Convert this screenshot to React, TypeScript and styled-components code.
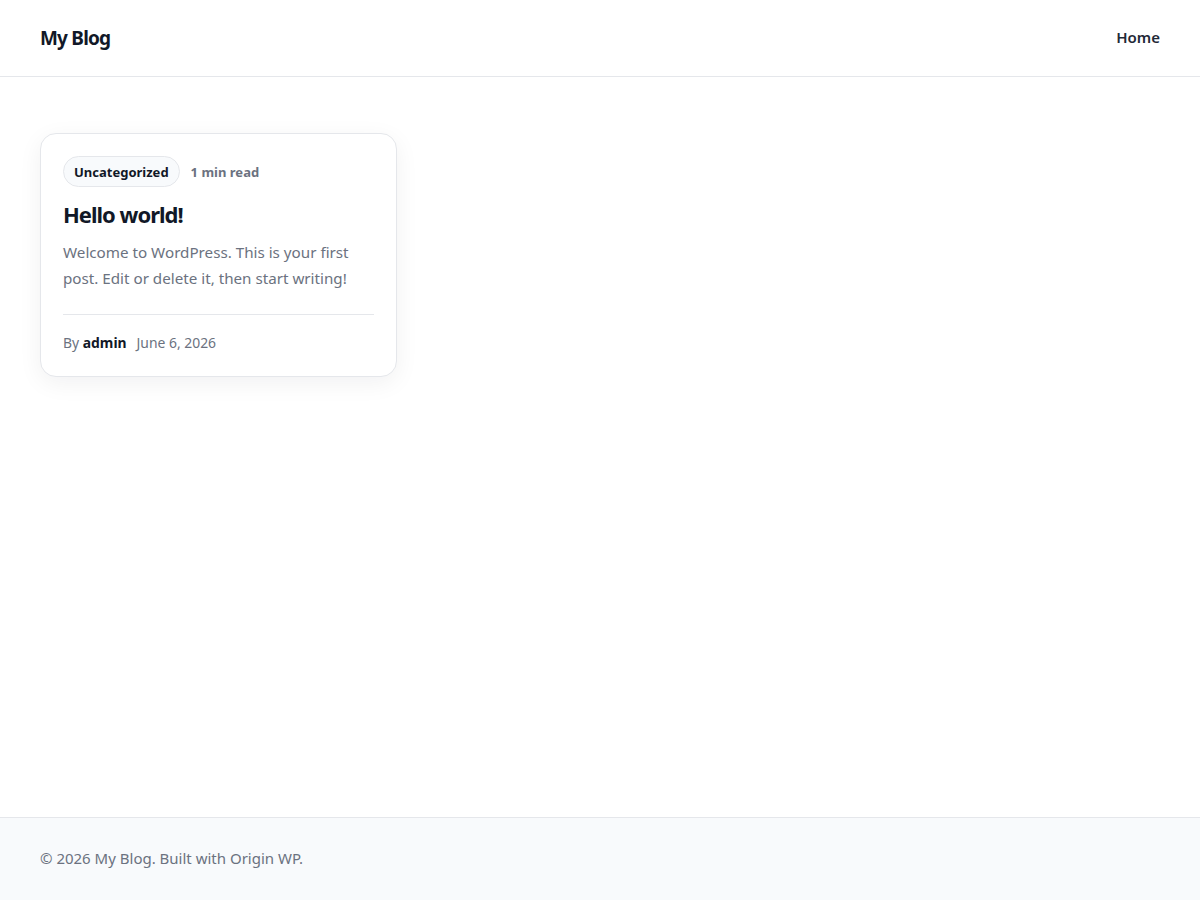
import React from 'react'
import styled, { createGlobalStyle } from 'styled-components'

const GlobalStyle = createGlobalStyle`
    * { box-sizing : border-box; }
    html, body {
        margin : 0;
        padding : 0;
        background : #ffffff;
        font-family : 'Noto Sans', 'Open Sans', sans-serif;
        color : #111827;
    }
`

const Page = styled.div`
    min-height : 100vh;
    display : flex;
    flex-direction : column;
`

const Header = styled.header`
    height : 77px;
    border-bottom : 1px solid #e5e7eb;
    display : flex;
    align-items : center;
    justify-content : space-between;
    padding : 0 40px;
`

const Logo = styled.a`
    font-size : 19px;
    font-weight : 700;
    letter-spacing : -0.8px;
    color : #111827;
    text-decoration : none;
`

const NavLink = styled.a`
    font-size : 15px;
    font-weight : 600;
    color : #1f2937;
    text-decoration : none;
    padding-bottom : 2px;
`

const Main = styled.main`
    flex : 1;
    padding : 56px 40px;
`

const Grid = styled.div`
    display : grid;
    grid-template-columns : repeat(3, 1fr);
    gap : 24px;
`

const Card = styled.article`
    background : #fff;
    border : 1px solid #e5e7eb;
    border-radius : 16px;
    padding : 22px 22px 23px;
    box-shadow : 0 6px 24px rgba(15, 23, 42, 0.06);
`

const Meta = styled.div`
    display : flex;
    align-items : center;
    gap : 11px;
`

const Badge = styled.span`
    display : inline-flex;
    align-items : center;
    height : 31px;
    padding : 0 10px;
    border-radius : 999px;
    background : #f8fafc;
    border : 1px solid #e5e7eb;
    font-size : 13px;
    font-weight : 700;
    color : #111827;
`

const ReadTime = styled.span`
    font-size : 13px;
    font-weight : 700;
    color : #6b7280;
`

const Title = styled.h2`
    margin : 12px 0 0;
    font-size : 22px;
    line-height : 30px;
    font-weight : 700;
    letter-spacing : -1px;
    color : #111827;
`

const Excerpt = styled.p`
    margin : 10px 0 0;
    font-size : 15.2px;
    line-height : 26px;
    color : #6b7280;
`

const CardFooter = styled.div`
    margin-top : 23px;
    padding-top : 18px;
    border-top : 1px solid #e5e7eb;
    display : flex;
    align-items : center;
    gap : 10px;
    font-size : 13.9px;
    line-height : 20px;
    color : #6b7280;

    strong {
        color : #111827;
        font-weight : 700;
    }
`

const Footer = styled.footer`
    background : #f8fafc;
    border-top : 1px solid #e5e7eb;
    height : 83px;
    display : flex;
    align-items : center;
    padding : 0 40px 2px;
    font-size : 15px;
    color : #6b7280;
`

const App = () => {
    return (
        <Page>
            <GlobalStyle />
            <Header>
                <Logo href="#">My Blog</Logo>
                <NavLink href="#">Home</NavLink>
            </Header>
            <Main>
                <Grid>
                    <Card>
                        <Meta>
                            <Badge>Uncategorized</Badge>
                            <ReadTime>1 min read</ReadTime>
                        </Meta>
                        <Title>Hello world!</Title>
                        <Excerpt>Welcome to WordPress. This is your first post. Edit or delete it, then start writing!</Excerpt>
                        <CardFooter>
                            <span>By <strong>admin</strong></span>
                            <span>June 6, 2026</span>
                        </CardFooter>
                    </Card>
                </Grid>
            </Main>
            <Footer>© 2026 My Blog. Built with Origin WP.</Footer>
        </Page>
    )
}

export default App
